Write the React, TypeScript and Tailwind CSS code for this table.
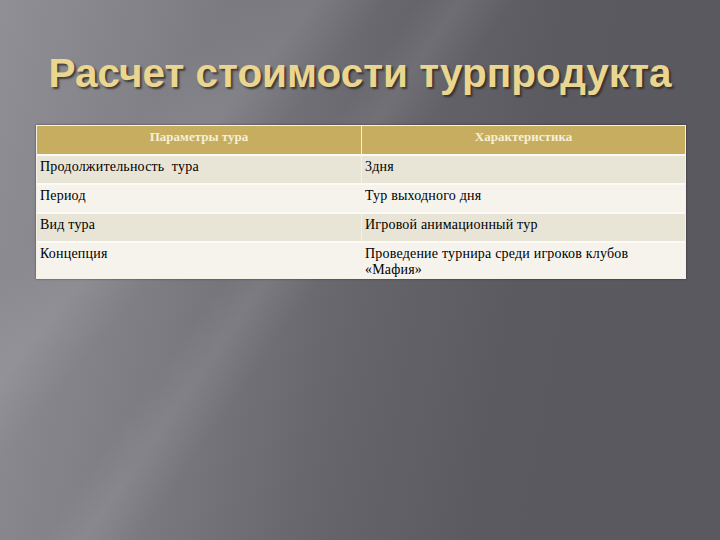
const rows = [
  { param: 'Продолжительность  тура', value: '3дня', bg: 'bg-[#e9e5d6]' },
  { param: 'Период', value: 'Тур выходного дня', bg: 'bg-[#f5f3ec]' },
  { param: 'Вид тура', value: 'Игровой анимационный тур', bg: 'bg-[#e9e5d6]' },
  { param: 'Концепция', value: 'Проведение турнира среди игроков клубов «Мафия»', bg: 'bg-[#f5f3ec]' },
]

export default function App() {
  return (
    <div className="w-[720px] h-[540px] overflow-hidden bg-[#5b5a60] bg-[linear-gradient(125deg,transparent_0%,transparent_38%,rgba(255,255,255,0.07)_42%,transparent_47%),linear-gradient(130deg,transparent_20%,rgba(255,255,255,0.08)_27%,transparent_33%),linear-gradient(100deg,#908f96_0%,#7e7d84_25%,#66656b_50%,#5b5a60_70%,#5a5960_100%)]">
      {/* Title */}
      <div className="pt-[49px] h-[125px] flex justify-center">
        <h1 className="font-['Liberation_Sans'] font-bold text-[40.5px] leading-[48px] text-[#ead690] [text-shadow:2px_2px_2px_rgba(40,36,30,0.75)]">
          Расчет стоимости турпродукта
        </h1>
      </div>

      {/* Table */}
      <div className="ml-[36px] w-[650px] border border-[#f4f1e6] shadow-[0_0_2px_rgba(0,0,0,0.5)] font-['Liberation_Serif'] text-[14px] leading-[16px] tracking-[0.2px] text-black">
        <div className="grid grid-cols-[325px_1fr] bg-[#c6ad60] h-[28px] leading-[19px]">
          <div className="border-r border-[#f4f1e6] text-center text-[#f6f0d6] font-bold text-[13px] tracking-normal pt-[1px]">Параметры тура</div>
          <div className="text-center text-[#f6f0d6] font-bold text-[13px] tracking-normal pt-[1px]">Характеристика</div>
        </div>
        {rows.map((r, i) => (
          <div
            key={i}
            className={`grid grid-cols-[325px_1fr] border-t-2 border-[#fbfaf6] ${r.bg} ${i === rows.length - 1 ? 'min-h-[33px]' : 'h-[29px]'}`}
          >
            <div className="border-r border-[#f4f1e6] pl-[3px] pt-[3px] whitespace-pre">{r.param}</div>
            <div className="pl-[3px] pt-[3px] pr-[40px]">{r.value}</div>
          </div>
        ))}
      </div>
    </div>
  )
}
